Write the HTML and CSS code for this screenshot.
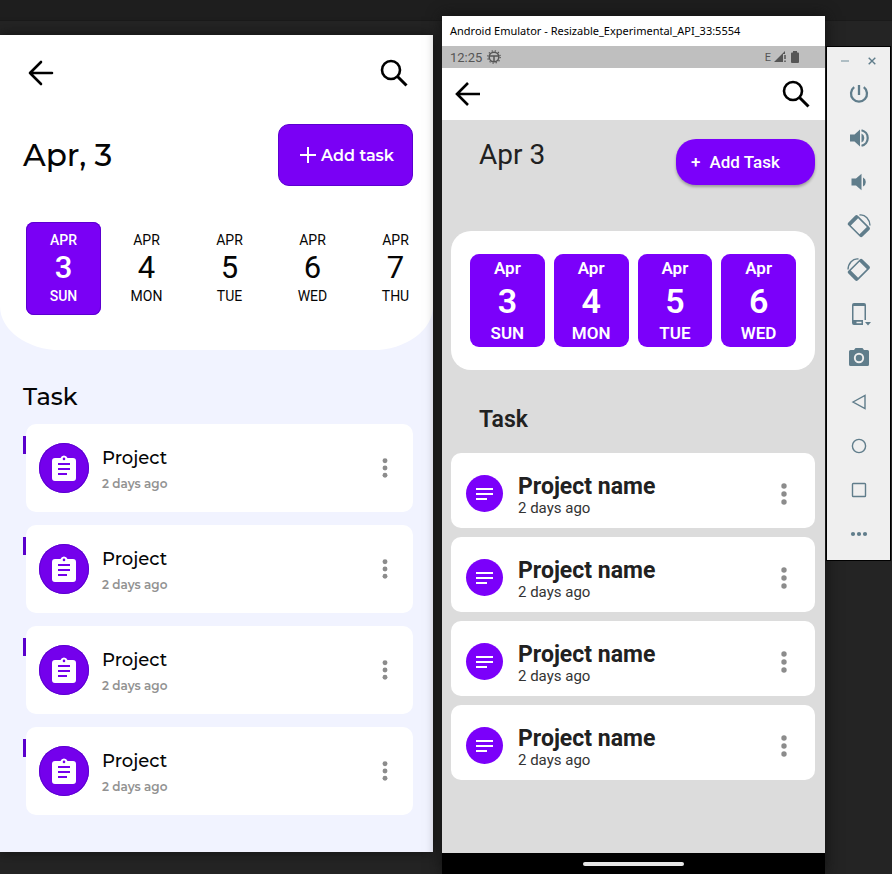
FILE: index.html
```html
<!DOCTYPE html>
<html lang="en">
<head>
<meta charset="utf-8">
<meta name="viewport" content="width=device-width, initial-scale=1">
<title>Task planner</title>
<link rel="stylesheet" href="styles.css">
</head>
<body>
<svg class="sprite" aria-hidden="true">
  <symbol id="back" viewBox="0 0 26 26"><path d="M25 13H2M13 2 2 13l11 11" fill="none" stroke="currentColor" stroke-width="2.6"/></symbol>
  <symbol id="back-round" viewBox="0 0 26 26"><path d="M24 13H2M13 2 2 13l11 11" fill="none" stroke="currentColor" stroke-width="2.6" stroke-linecap="round" stroke-linejoin="round"/></symbol>
  <symbol id="search" viewBox="0 0 28 28"><circle cx="11" cy="11" r="9" fill="none" stroke="currentColor" stroke-width="2.6"/><path d="m17.500 17.500 9 9" stroke="currentColor" stroke-width="3"/></symbol>
  <symbol id="dots" viewBox="0 0 6 22"><circle cx="3" cy="3" r="2.700"/><circle cx="3" cy="11" r="2.700"/><circle cx="3" cy="19" r="2.700"/></symbol>
  <symbol id="clipboard" viewBox="0 0 24 26"><path fill="#fff" fill-rule="evenodd" d="M3 3h5.500a3.700 3.700 0 0 1 7 0H21a3 3 0 0 1 3 3v17a3 3 0 0 1-3 3H3a3 3 0 0 1-3-3V6a3 3 0 0 1 3-3Zm9-.4a1.300 1.300 0 1 0 0 2.600 1.300 1.300 0 0 0 0-2.600ZM6 8v2h12V8Zm0 5v2h12v-2Zm0 5v2h9v-2Z"/></symbol>
  <symbol id="lines" viewBox="0 0 17 12"><path d="M0 1h17M0 6h17M0 11h11" stroke="#fff" stroke-width="2"/></symbol>
</svg>
<div class="desktop">
  <section class="mockup" aria-label="Design">
    <header class="mockup-head">
      <nav class="mockup-bar">
        <button class="icon-button" aria-label="Back"><svg width="26" height="26"><use href="#back-round"/></svg></button>
        <button class="icon-button" aria-label="Search"><svg width="28" height="28"><use href="#search"/></svg></button>
      </nav>
      <div class="mockup-title">
        <h1>Apr, 3</h1>
        <button class="add-task"><svg width="16" height="16" viewBox="0 0 16 16" aria-hidden="true"><path d="M8 0v16M0 8h16" stroke="currentColor" stroke-width="2"/></svg>Add task</button>
      </div>
      <div class="dates">
        <button class="date selected"><span>APR</span><b>3</b><span>SUN</span></button>
        <button class="date"><span>APR</span><b>4</b><span>MON</span></button>
        <button class="date"><span>APR</span><b>5</b><span>TUE</span></button>
        <button class="date"><span>APR</span><b>6</b><span>WED</span></button>
        <button class="date"><span>APR</span><b>7</b><span>THU</span></button>
      </div>
    </header>
    <h2>Task</h2>
    <ul class="projects">
      <li class="project"><span class="badge"><svg width="24" height="26"><use href="#clipboard"/></svg></span><div class="text"><h3>Project</h3><p>2 days ago</p></div><button class="icon-button more" aria-label="More"><svg width="6" height="20"><use href="#dots"/></svg></button></li>
      <li class="project"><span class="badge"><svg width="24" height="26"><use href="#clipboard"/></svg></span><div class="text"><h3>Project</h3><p>2 days ago</p></div><button class="icon-button more" aria-label="More"><svg width="6" height="20"><use href="#dots"/></svg></button></li>
      <li class="project"><span class="badge"><svg width="24" height="26"><use href="#clipboard"/></svg></span><div class="text"><h3>Project</h3><p>2 days ago</p></div><button class="icon-button more" aria-label="More"><svg width="6" height="20"><use href="#dots"/></svg></button></li>
      <li class="project"><span class="badge"><svg width="24" height="26"><use href="#clipboard"/></svg></span><div class="text"><h3>Project</h3><p>2 days ago</p></div><button class="icon-button more" aria-label="More"><svg width="6" height="20"><use href="#dots"/></svg></button></li>
    </ul>
  </section>

  <section class="emulator" aria-label="Emulator">
    <div class="window-title">Android Emulator - Resizable_Experimental_API_33:5554</div>
    <div class="status">
      <span>12:25</span>
      <svg width="14" height="14" viewBox="0 0 14 14" aria-hidden="true"><circle cx="7" cy="7" r="4.800" fill="none" stroke="currentColor" stroke-width="1.500"/><circle cx="7" cy="7" r="6.200" fill="none" stroke="currentColor" stroke-width="1.300" stroke-dasharray="1.300 1.950"/><path d="M3 6h8M7 6v5" stroke="currentColor" stroke-width="1.500"/></svg>
      <span class="network">E</span>
      <svg width="12" height="12" viewBox="0 0 12 12" aria-hidden="true"><path d="M0 11 11 0v3H9v8Z" fill="currentColor"/><path d="M11 4v4M11 9.500V11" stroke="currentColor" stroke-width="1.500"/></svg>
      <svg class="battery" width="8" height="12" viewBox="0 0 8 12" aria-hidden="true"><path d="M2 0h4v1.500h1a1 1 0 0 1 1 1V11a1 1 0 0 1-1 1H1a1 1 0 0 1-1-1V2.500a1 1 0 0 1 1-1h1Z" fill="currentColor"/></svg>
    </div>
    <nav class="app-bar">
      <button class="icon-button" aria-label="Back"><svg width="26" height="26"><use href="#back"/></svg></button>
      <button class="icon-button" aria-label="Search"><svg width="28" height="28"><use href="#search"/></svg></button>
    </nav>
    <main class="screen">
      <div class="screen-title">
        <h1>Apr 3</h1>
        <button class="fab"><span>+</span>Add Task</button>
      </div>
      <div class="day-card">
        <button class="day"><span>Apr</span><b>3</b><span>SUN</span></button>
        <button class="day"><span>Apr</span><b>4</b><span>MON</span></button>
        <button class="day"><span>Apr</span><b>5</b><span>TUE</span></button>
        <button class="day"><span>Apr</span><b>6</b><span>WED</span></button>
      </div>
      <h2>Task</h2>
      <ul class="tiles">
        <li class="tile"><span class="avatar"><svg width="17" height="12"><use href="#lines"/></svg></span><div class="text"><h3>Project name</h3><p>2 days ago</p></div><button class="icon-button more" aria-label="More"><svg width="6" height="22"><use href="#dots"/></svg></button></li>
        <li class="tile"><span class="avatar"><svg width="17" height="12"><use href="#lines"/></svg></span><div class="text"><h3>Project name</h3><p>2 days ago</p></div><button class="icon-button more" aria-label="More"><svg width="6" height="22"><use href="#dots"/></svg></button></li>
        <li class="tile"><span class="avatar"><svg width="17" height="12"><use href="#lines"/></svg></span><div class="text"><h3>Project name</h3><p>2 days ago</p></div><button class="icon-button more" aria-label="More"><svg width="6" height="22"><use href="#dots"/></svg></button></li>
        <li class="tile"><span class="avatar"><svg width="17" height="12"><use href="#lines"/></svg></span><div class="text"><h3>Project name</h3><p>2 days ago</p></div><button class="icon-button more" aria-label="More"><svg width="6" height="22"><use href="#dots"/></svg></button></li>
      </ul>
    </main>
    <div class="gesture"><span></span></div>
  </section>

  <aside class="tools" aria-label="Emulator controls">
    <div class="window-buttons">
      <button aria-label="Minimize"><svg width="8" height="8" viewBox="0 0 8 8"><path d="M0 4h8" stroke="#9fb1b9" stroke-width="1.600"/></svg></button>
      <button aria-label="Close"><svg width="8" height="8" viewBox="0 0 8 8"><path d="m.7.7 6.600 6.600M7.300.7.700 7.300" stroke="currentColor" stroke-width="1.400"/></svg></button>
    </div>
    <button aria-label="Power"><svg viewBox="0 0 24 24"><path d="M12 3v10M7.200 5.200a8 8 0 1 0 9.600 0" fill="none" stroke="currentColor" stroke-width="2.300"/></svg></button>
    <button aria-label="Volume up"><svg viewBox="0 0 24 24"><path d="M3 8.500v7h4.500l5.500 5V3.500l-5.500 5Z" fill="currentColor"/><path d="M14.500 7.500a5 5 0 0 1 0 9Z" fill="currentColor"/><path d="M14.500 4.200a8 8 0 0 1 0 15.600" fill="none" stroke="currentColor" stroke-width="2.200"/></svg></button>
    <button aria-label="Volume down"><svg viewBox="0 0 24 24"><path d="M4.500 8.500v7H9l5.500 4.800V3.700L9 8.500Z" fill="currentColor"/><path d="M16 7.500a5 5 0 0 1 0 9Z" fill="currentColor"/></svg></button>
    <button aria-label="Rotate left"><svg viewBox="0 0 24 24"><path transform="rotate(-45 12 12)" fill="currentColor" fill-rule="evenodd" d="M7 2h9.500a2 2 0 0 1 2 2v16a2 2 0 0 1-2 2H7a2 2 0 0 1-2-2V4a2 2 0 0 1 2-2Zm-.4 3.800v12.400h10.300V5.800Z"/><path d="M12.500 1c6-.9 10.300 4.500 10.500 10.500" fill="none" stroke="currentColor" stroke-width="1.400"/></svg></button>
    <button aria-label="Rotate right"><svg viewBox="0 0 24 24"><path transform="rotate(45 12 12)" fill="currentColor" fill-rule="evenodd" d="M7 2h9.500a2 2 0 0 1 2 2v16a2 2 0 0 1-2 2H7a2 2 0 0 1-2-2V4a2 2 0 0 1 2-2Zm-.4 3.800v12.400h10.300V5.800Z"/><path d="M11.500 1C5.500.1 1.200 5.500 1 11.500" fill="none" stroke="currentColor" stroke-width="1.400"/></svg></button>
    <button aria-label="Device size"><svg viewBox="0 0 24 24"><path fill="currentColor" fill-rule="evenodd" d="M7 1h10a2 2 0 0 1 2 2v15h-1.500V4h-11v14H16v5H7a2 2 0 0 1-2-2V3a2 2 0 0 1 2-2Zm2.500 18.800v1.400h5v-1.400ZM18 20h6l-3 3.500Z"/></svg></button>
    <button aria-label="Screenshot"><svg viewBox="0 0 24 24"><path fill="currentColor" d="M8.500 2h7l1.500 2h3.500A1.500 1.500 0 0 1 22 5.500v13a1.500 1.500 0 0 1-1.500 1.500h-17A1.500 1.500 0 0 1 2 18.500v-13A1.500 1.500 0 0 1 3.500 4H7Z"/><circle cx="12" cy="12" r="4.200" fill="none" stroke="#efefef" stroke-width="1.900"/></svg></button>
    <button aria-label="Back"><svg viewBox="0 0 24 24"><path d="m6 12 12-6.500v13Z" fill="none" stroke="currentColor" stroke-width="1.400"/></svg></button>
    <button aria-label="Home"><svg viewBox="0 0 24 24"><circle cx="12" cy="12" r="6.600" fill="none" stroke="currentColor" stroke-width="1.400"/></svg></button>
    <button aria-label="Overview"><svg viewBox="0 0 24 24"><rect x="5.500" y="5.500" width="13" height="13" rx=".8" fill="none" stroke="currentColor" stroke-width="1.400"/></svg></button>
    <button aria-label="More controls"><svg viewBox="0 0 24 24" fill="currentColor"><circle cx="6" cy="12" r="2.100"/><circle cx="12" cy="12" r="2.100"/><circle cx="18" cy="12" r="2.100"/></svg></button>
  </aside>
</div>
</body>
</html>
```
FILE: styles.css
```css
* { box-sizing: border-box; }

body {
  margin: 0;
  background: #242424;
  font-family: Roboto, "Liberation Sans", sans-serif;
}

h1, h2, h3, p, ul { margin: 0; padding: 0; }
ul { list-style: none; }
svg { display: block; flex: none; }
button { padding: 0; border: 0; background: none; color: inherit; font: inherit; }
.sprite { position: absolute; width: 0; height: 0; }
.icon-button { color: #000; }
.more { display: grid; place-items: center; width: 20px; height: 32px; fill: #8c8c8c; }

.desktop {
  display: grid;
  grid-template-columns: minmax(0, 433fr) minmax(0, 393fr) 65px;
  min-height: 100vh;
  padding-right: 1px;
  background: linear-gradient(#1e1e1e 20px, #1a1a1a 20px, #1a1a1a 21px, #242424 21px);
}

/* Design board */
.mockup {
  align-self: start;
  margin-top: 35px;
  padding-bottom: 37px;
  background: #f1f3ff;
  color: #050505;
  font-family: Montserrat, Inter, sans-serif;
  box-shadow: 0 0 12px #111;
}
.mockup-head {
  padding-bottom: 35px;
  border-radius: 0 0 60px 60px / 0 0 44px 44px;
  background: #fff;
}
.mockup-bar {
  display: flex;
  justify-content: space-between;
  align-items: center;
  height: 76px;
  padding: 0 25px 0 28px;
}
.mockup-title {
  display: flex;
  justify-content: space-between;
  align-items: center;
  margin: 13px 20px 36px 23px;
}
.mockup-title h1 { font-size: 31px; font-weight: 500; line-height: 40px; }
.add-task {
  display: flex;
  align-items: center;
  justify-content: center;
  gap: 5px;
  height: 62px;
  padding: 0 18px 0 21px;
  border: 1px solid #5c00d0;
  border-radius: 11px;
  background: #7a00f5;
  color: #fff;
  font-size: 16px;
  font-weight: 600;
}
.dates {
  display: grid;
  grid-template-columns: repeat(5, minmax(0, 1fr));
  gap: 8px;
  padding-left: 26px;
  font-family: Roboto, sans-serif;
}
.date {
  display: flex;
  flex-direction: column;
  align-items: center;
  height: 93px;
  padding-top: 8px;
  border-radius: 8px;
  font-size: 14px;
  line-height: 20px;
}
.date b { font-size: 31px; font-weight: 400; line-height: 36px; }
.selected { background: #7a00f5; color: #fff; font-weight: 500; box-shadow: inset 0 0 0 1px #5c00d0; }
.selected b { font-weight: 500; }

.mockup h2 { margin: 31px 23px 11px; font-size: 24px; font-weight: 500; line-height: 32px; }
.projects { display: grid; gap: 13px; margin: 0 20px 0 26px; }
.project {
  position: relative;
  display: flex;
  align-items: center;
  gap: 13px;
  height: 88px;
  padding: 0 18px 0 13px;
  border-radius: 10px;
  background: #fff;
}
.project::before {
  content: "";
  position: absolute;
  top: 12px;
  left: -3px;
  width: 3px;
  height: 18px;
  background: #5a00cc;
}
.text { flex: 1; }
.project .text { padding-top: 5px; }
.badge, .avatar { display: grid; place-items: center; border-radius: 50%; }
.badge { width: 50px; height: 50px; background: #7400ec; box-shadow: inset 0 0 0 1px #5c00d0; }
.project h3 { font-size: 18px; font-weight: 500; line-height: 26px; }
.project p { color: #929292; font-size: 12px; font-weight: 600; line-height: 26px; }

/* Emulator window */
.emulator {
  display: flex;
  flex-direction: column;
  margin: 16px 1px 0 9px;
  background: #dcdcdc;
  color: #212121;
  box-shadow: 0 0 14px #111;
}
.window-title {
  padding: 0 8px;
  background: #fff;
  color: #000;
  font: 11px/30px "Noto Sans", sans-serif;
  white-space: nowrap;
  overflow: hidden;
}
.status {
  display: flex;
  align-items: center;
  height: 22px;
  gap: 5px;
  padding: 0 26px 0 8px;
  background: #bfbfbf;
  color: #555;
  font-size: 13px;
}
.network { margin-left: auto; font-size: 11px; margin-right: -2px; }
.app-bar {
  display: flex;
  justify-content: space-between;
  align-items: center;
  height: 52px;
  padding: 0 15px 0 13px;
  background: #fff;
}
.screen { flex: 1; padding: 19px 10px 0 9px; }
.screen-title { display: flex; justify-content: space-between; margin: 0 0 46px 28px; }
.screen-title h1 { font-size: 28px; font-weight: 400; line-height: 32px; }
.fab {
  display: flex;
  align-items: center;
  gap: 9px;
  width: 139px;
  height: 46px;
  padding-left: 15px;
  border-radius: 20px;
  background: #7b00fa;
  color: #fff;
  font-size: 17px;
  font-weight: 500;
  box-shadow: 0 2px 3px rgb(0 0 0 / 30%);
}
.day-card {
  display: grid;
  grid-template-columns: repeat(4, minmax(0, 1fr));
  gap: 9px;
  padding: 23px 19px;
  border-radius: 20px;
  background: #fff;
}
.day {
  display: flex;
  flex-direction: column;
  align-items: center;
  justify-content: space-between;
  height: 93px;
  padding: 4px 0;
  border-radius: 9px;
  background: #7b00fa;
  color: #fff;
  font-size: 17px;
  font-weight: 600;
  line-height: 20px;
}
.day b { font-size: 34px; font-weight: 600; line-height: 40px; }
.screen h2 { margin: 34px 28px 17px; font-size: 23px; font-weight: 600; line-height: 32px; }
.tiles { display: grid; gap: 9px; }
.tile {
  display: flex;
  align-items: center;
  gap: 15px;
  height: 75px;
  padding: 6px 21px 0 15px;
  border-radius: 10px;
  background: #fff;
}
.tile .text { padding-top: 6px; }
.avatar { width: 37px; height: 37px; background: #7b00fa; }
.tile h3 { font-size: 23px; font-weight: 700; line-height: 22px; }
.tile p { color: #333; font-size: 15px; line-height: 20px; }
.gesture { display: grid; place-items: center; height: 21px; background: #000; }
.gesture span { width: 101px; height: 4px; border-radius: 2px; background: #e8e8e8; }

/* Emulator side controls */
.tools {
  display: flex;
  flex-direction: column;
  align-items: center;
  align-self: start;
  gap: 20px;
  margin-top: 46px;
  padding-bottom: 14px;
  border: 1px solid #000;
  background: #efefef;
  color: #607d8b;
}
.tools > button, .tools > button svg { width: 24px; height: 24px; }
.window-buttons { display: flex; gap: 19px; height: 15px; padding-top: 10px; }
```
